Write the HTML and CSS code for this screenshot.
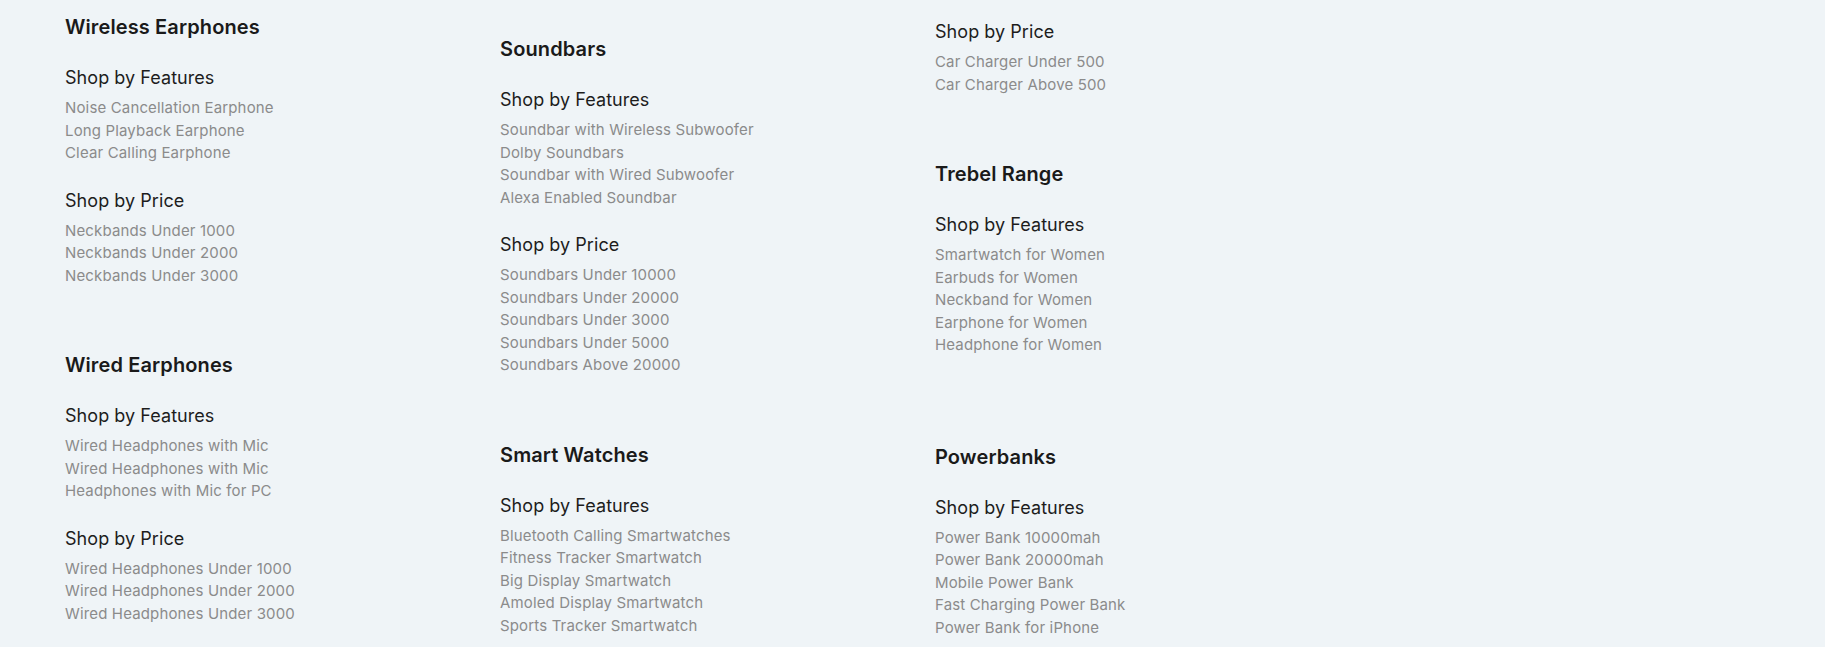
FILE: index.html
```html
<!DOCTYPE html>
<html lang="en">
<head>
<meta charset="utf-8">
<title>Shop categories</title>
<link rel="stylesheet" href="styles.css">
</head>
<body>
<main class="catalog">
  <div class="column column-1">
    <section class="category">
      <h2 class="category-title">Wireless Earphones</h2>
      <div class="group">
        <h3 class="group-title">Shop by Features</h3>
        <ul class="links">
          <li>Noise Cancellation Earphone</li>
          <li>Long Playback Earphone</li>
          <li>Clear Calling Earphone</li>
        </ul>
      </div>
      <div class="group">
        <h3 class="group-title">Shop by Price</h3>
        <ul class="links">
          <li>Neckbands Under 1000</li>
          <li>Neckbands Under 2000</li>
          <li>Neckbands Under 3000</li>
        </ul>
      </div>
    </section>
    <section class="category">
      <h2 class="category-title">Wired Earphones</h2>
      <div class="group">
        <h3 class="group-title">Shop by Features</h3>
        <ul class="links">
          <li>Wired Headphones with Mic</li>
          <li>Wired Headphones with Mic</li>
          <li>Headphones with Mic for PC</li>
        </ul>
      </div>
      <div class="group">
        <h3 class="group-title">Shop by Price</h3>
        <ul class="links">
          <li>Wired Headphones Under 1000</li>
          <li>Wired Headphones Under 2000</li>
          <li>Wired Headphones Under 3000</li>
        </ul>
      </div>
    </section>
  </div>

  <div class="column column-2">
    <section class="category">
      <h2 class="category-title">Soundbars</h2>
      <div class="group">
        <h3 class="group-title">Shop by Features</h3>
        <ul class="links">
          <li>Soundbar with Wireless Subwoofer</li>
          <li>Dolby Soundbars</li>
          <li>Soundbar with Wired Subwoofer</li>
          <li>Alexa Enabled Soundbar</li>
        </ul>
      </div>
      <div class="group">
        <h3 class="group-title">Shop by Price</h3>
        <ul class="links">
          <li>Soundbars Under 10000</li>
          <li>Soundbars Under 20000</li>
          <li>Soundbars Under 3000</li>
          <li>Soundbars Under 5000</li>
          <li>Soundbars Above 20000</li>
        </ul>
      </div>
    </section>
    <section class="category">
      <h2 class="category-title">Smart Watches</h2>
      <div class="group">
        <h3 class="group-title">Shop by Features</h3>
        <ul class="links">
          <li>Bluetooth Calling Smartwatches</li>
          <li>Fitness Tracker Smartwatch</li>
          <li>Big Display Smartwatch</li>
          <li>Amoled Display Smartwatch</li>
          <li>Sports Tracker Smartwatch</li>
        </ul>
      </div>
    </section>
  </div>

  <div class="column column-3">
    <section class="category category-continued">
      <div class="group">
        <h3 class="group-title">Shop by Price</h3>
        <ul class="links">
          <li>Car Charger Under 500</li>
          <li>Car Charger Above 500</li>
        </ul>
      </div>
    </section>
    <section class="category">
      <h2 class="category-title">Trebel Range</h2>
      <div class="group">
        <h3 class="group-title">Shop by Features</h3>
        <ul class="links">
          <li>Smartwatch for Women</li>
          <li>Earbuds for Women</li>
          <li>Neckband for Women</li>
          <li>Earphone for Women</li>
          <li>Headphone for Women</li>
        </ul>
      </div>
    </section>
    <section class="category category-spaced">
      <h2 class="category-title">Powerbanks</h2>
      <div class="group">
        <h3 class="group-title">Shop by Features</h3>
        <ul class="links">
          <li>Power Bank 10000mah</li>
          <li>Power Bank 20000mah</li>
          <li>Mobile Power Bank</li>
          <li>Fast Charging Power Bank</li>
          <li>Power Bank for iPhone</li>
        </ul>
      </div>
    </section>
  </div>
</main>
</body>
</html>
```

FILE: styles.css
```css
html, body {
  margin: 0;
  padding: 0;
  background: #eff4f7;
}

body {
  font-family: "Inter", "Liberation Sans", sans-serif;
  color: #1b1b1b;
  height: 647px;
  overflow: hidden;
}

.catalog {
  display: flex;
  padding-left: 65px;
}

.column {
  width: 435px;
  display: flex;
  flex-direction: column;
  gap: 66px;
}

.column-1 { padding-top: 15px; }
.column-2 { padding-top: 37px; }
.column-3 { padding-top: 21px; }

.category {
  display: flex;
  flex-direction: column;
  gap: 25px;
}

.category-spaced {
  margin-top: 22px;
}

.category-title {
  margin: 0 0 3px;
  font-size: 20px;
  line-height: 24px;
  font-weight: 600;
  letter-spacing: 0.12px;
  color: #1a1a1a;
}

.group {
  display: flex;
  flex-direction: column;
  gap: 8px;
}

.group-title {
  margin: 0;
  font-size: 18px;
  line-height: 22px;
  font-weight: 400;
  letter-spacing: 0.05px;
  color: #1d1d1d;
}

.links {
  list-style: none;
  margin: 0;
  padding: 0;
}

.links li {
  font-size: 15px;
  line-height: 22.5px;
  letter-spacing: 0.15px;
  color: #8b8b8b;
}
```
